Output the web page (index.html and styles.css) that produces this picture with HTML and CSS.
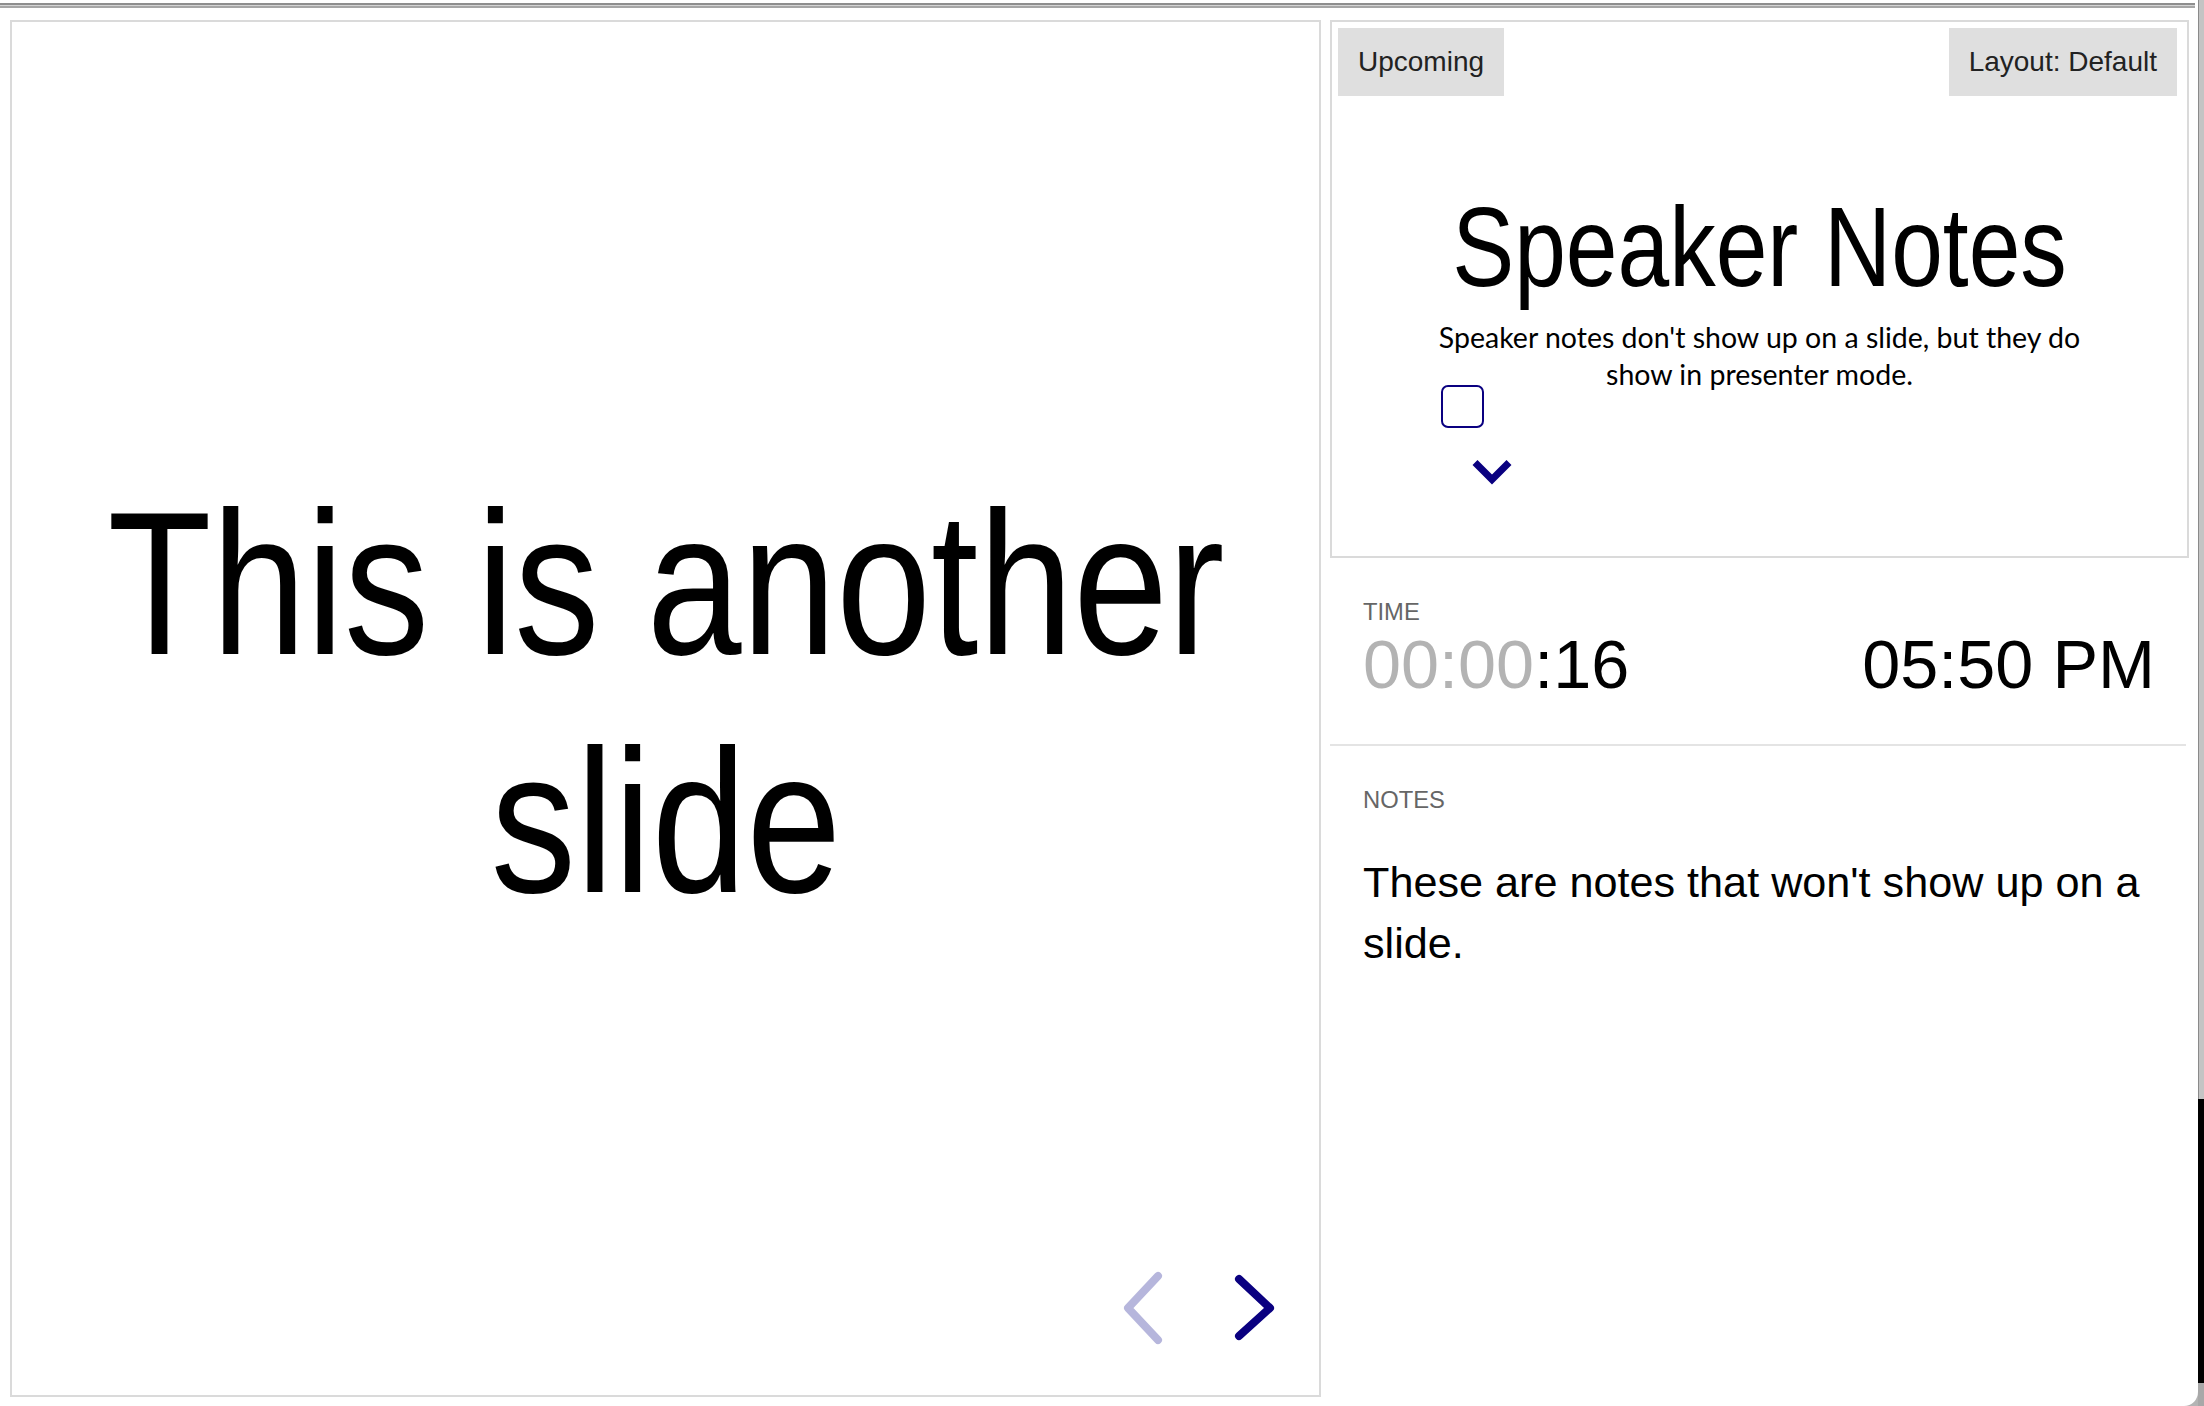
FILE: index.html
```html
<!DOCTYPE html>
<html lang="en">
<head>
<meta charset="utf-8">
<title>reveal.js - Speaker View</title>
<link rel="stylesheet" href="styles.css">
</head>
<body>
<div class="window">
  <div class="page">
    <div class="topbar"><div class="topbar-lines"></div></div>
    <div class="main">
      <section class="current-slide">
        <h1 class="slide-title">This is another slide</h1>
        <div class="controls">
          <svg class="nav-arrow nav-prev" width="46" height="80" viewBox="0 0 46 80" aria-label="Previous slide">
            <polyline points="38,8 8,40 38,72" fill="none" stroke="currentColor" stroke-width="8" stroke-linecap="round" stroke-linejoin="round"/>
          </svg>
          <svg class="nav-arrow nav-next" width="48" height="80" viewBox="0 0 48 80" aria-label="Next slide">
            <polyline points="9,11 40,40 9,68" fill="none" stroke="currentColor" stroke-width="8" stroke-linecap="round" stroke-linejoin="round"/>
          </svg>
        </div>
      </section>
      <aside class="side">
        <section class="upcoming">
          <div class="overlay-element upcoming-label">Upcoming</div>
          <div class="overlay-element layout-label">Layout: Default</div>
          <div class="preview">
            <h2 class="preview-title">Speaker Notes</h2>
            <p class="preview-text">Speaker notes don't show up on a slide, but they do show in presenter mode.</p>
            <div class="preview-box"></div>
            <svg class="preview-chevron" width="44" height="30" viewBox="0 0 44 30" aria-label="Down">
              <polyline points="5,5.5 22,22.5 39,5.5" fill="none" stroke="currentColor" stroke-width="7" stroke-linecap="butt" stroke-linejoin="miter"/>
            </svg>
          </div>
        </section>
        <section class="speaker-controls">
          <div class="time">
            <h4 class="label">Time</h4>
            <div class="time-row">
              <span class="timer"><span class="mute">00:00</span>:16</span>
              <span class="clock">05:50 PM</span>
            </div>
          </div>
          <div class="notes">
            <h4 class="label">Notes</h4>
            <div class="notes-value">These are notes that won't show up on a slide.</div>
          </div>
        </section>
      </aside>
    </div>
  </div>
  <div class="edge">
    <div class="edge-top"></div>
    <div class="edge-black"></div>
    <div class="edge-bottom"></div>
  </div>
</div>
</body>
</html>
```

FILE: styles.css
```css
html, body {
  margin: 0;
  padding: 0;
  background: #fff;
}

body {
  font-family: "Liberation Sans", Arial, Helvetica, sans-serif;
  width: 2204px;
  height: 1406px;
  overflow: hidden;
}

.window {
  display: flex;
  width: 2204px;
  height: 1406px;
  background: #b4b4b4;
}

.page {
  width: 2198px;
  height: 1406px;
  background: #fff;
  border-bottom-right-radius: 14px;
  display: flex;
  flex-direction: column;
}

/* window chrome lines */
.topbar {
  height: 8px;
  padding-top: 3px;
  box-sizing: border-box;
}

.topbar-lines {
  height: 1px;
  border-top: 2px solid #8e8e8e;
  border-bottom: 2px solid #a6a6a6;
  background: #d4d4d4;
  margin-right: 3px;
}

.main {
  display: flex;
  gap: 9px;
  padding: 12px 0 0 10px;
}

/* current slide */
.current-slide {
  position: relative;
  width: 1311px;
  height: 1377px;
  box-sizing: border-box;
  border: 2px solid #dadada;
  display: flex;
  align-items: center;
  justify-content: center;
  padding-bottom: 14px;
  overflow: hidden;
}

/* condensed headline face: Liberation Sans narrowed horizontally */
.slide-title {
  flex: 0 0 1460px;
  width: 1460px;
  margin: 0;
  font-family: "Liberation Sans", Arial, sans-serif;
  font-weight: normal;
  font-size: 204px;
  line-height: 238px;
  text-align: center;
  color: #000;
  transform: scaleX(0.835);
  transform-origin: center center;
}

.controls {
  position: absolute;
  right: 41px;
  bottom: 47px;
  display: flex;
  gap: 64px;
}

.nav-arrow {
  display: block;
}

.nav-prev {
  color: #b6b6dc;
}

.nav-next {
  color: #0a0080;
}

/* right side */
.side {
  width: 868px;
  display: flex;
  flex-direction: column;
}

.upcoming {
  position: relative;
  width: 859px;
  height: 538px;
  box-sizing: border-box;
  border: 2px solid #dadada;
}

.overlay-element {
  position: absolute;
  top: 6px;
  height: 68px;
  line-height: 68px;
  padding: 0 20px;
  background: #dfdfdf;
  color: #222;
  font-size: 28px;
  z-index: 2;
}

.upcoming-label {
  left: 6px;
}

.layout-label {
  right: 10px;
}

.preview {
  padding-top: 156px;
  text-align: center;
}

.preview-title {
  margin: 0;
  font-family: "Liberation Sans", Arial, sans-serif;
  font-weight: normal;
  font-size: 114px;
  line-height: 137px;
  color: #000;
  transform: scaleX(0.815);
  transform-origin: center center;
}

.preview-text {
  margin: 4px auto 0;
  width: 680px;
  font-family: Lato, "Noto Sans", sans-serif;
  font-size: 28.5px;
  line-height: 37px;
  color: #000;
}

.preview-box {
  width: 43px;
  height: 43px;
  box-sizing: border-box;
  border: 2px solid #0a0080;
  border-radius: 7px;
  margin: -8px 0 0 109px;
}

.preview-chevron {
  display: block;
  margin: 29px 0 0 138px;
  color: #0a0080;
}

/* speaker controls */
.speaker-controls {
  width: 856px;
  padding-top: 20px;
}

.time {
  padding: 20px 31px 41px 33px;
  border-bottom: 2px solid #e4e4e4;
  margin-bottom: 20px;
}

.label {
  margin: 0;
  font-size: 23.76px;
  line-height: 27px;
  font-weight: normal;
  color: #666;
  text-transform: uppercase;
}

.time-row {
  display: flex;
  justify-content: space-between;
  font-size: 68.4px;
  line-height: 78px;
  color: #000;
}

.mute {
  color: #b3b3b3;
}

.notes {
  padding: 20px 32px 20px 33px;
}

.notes-value {
  margin-top: 39px;
  font-size: 43.2px;
  line-height: 61px;
  color: #000;
}

/* right window edge */
.edge {
  width: 6px;
  display: flex;
  flex-direction: column;
}

.edge-top {
  height: 1099px;
  box-sizing: border-box;
  border-left: 1px solid #8a8a8a;
  background: #c4c4c4;
}

.edge-black {
  height: 284px;
  background: #000;
}

.edge-bottom {
  flex: 1;
  background: #a8a8a8;
}
```
